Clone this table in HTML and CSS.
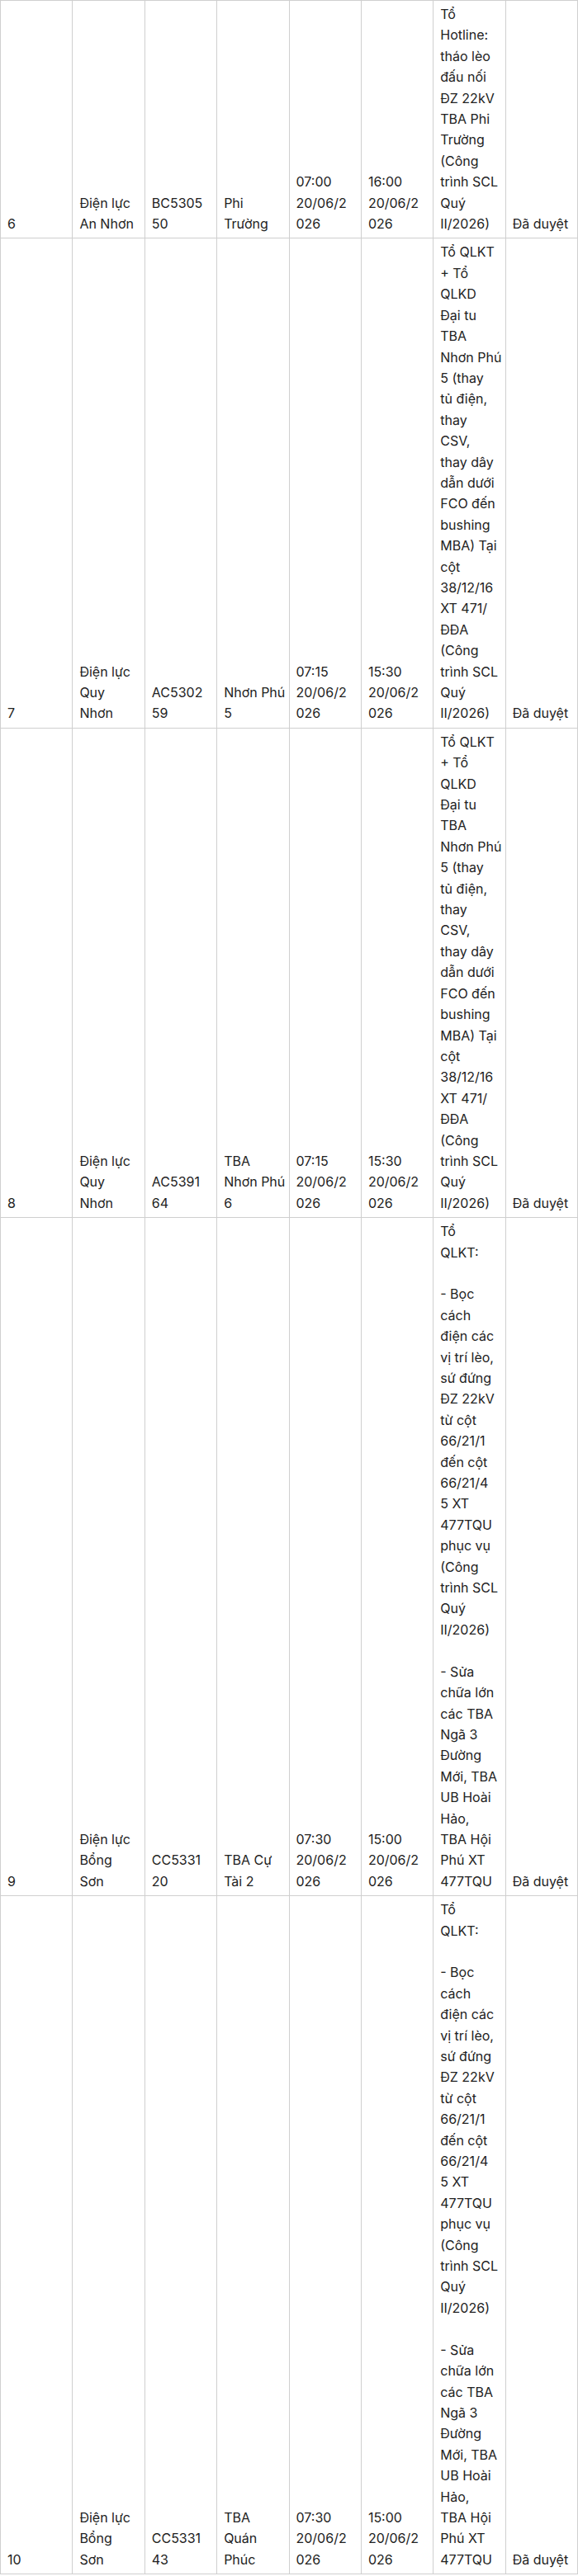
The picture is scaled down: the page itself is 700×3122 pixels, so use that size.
FILE: index.html
```html
<!DOCTYPE html>
<html lang="vi">
<head>
<meta charset="utf-8">
<title>Lịch cắt điện</title>
<link rel="stylesheet" href="styles.css">
</head>
<body>
<table class="schedule">
  <tbody>
    <tr>
      <td>6</td>
      <td>Điện lực<br>An Nhơn</td>
      <td>BC5305<br>50</td>
      <td>Phi<br>Trường</td>
      <td>07:00<br>20/06/2<br>026</td>
      <td>16:00<br>20/06/2<br>026</td>
      <td>Tổ<br>Hotline:<br>tháo lèo<br>đấu nối<br>ĐZ 22kV<br>TBA Phi<br>Trường<br>(Công<br>trình SCL<br>Quý<br>II/2026)</td>
      <td>Đã duyệt</td>
    </tr>
    <tr>
      <td>7</td>
      <td>Điện lực<br>Quy<br>Nhơn</td>
      <td>AC5302<br>59</td>
      <td>Nhơn Phú<br>5</td>
      <td>07:15<br>20/06/2<br>026</td>
      <td>15:30<br>20/06/2<br>026</td>
      <td>Tổ QLKT<br>+ Tổ<br>QLKD<br>Đại tu<br>TBA<br>Nhơn Phú<br>5 (thay<br>tủ điện,<br>thay<br>CSV,<br>thay dây<br>dẫn dưới<br>FCO đến<br>bushing<br>MBA) Tại<br>cột<br>38/12/16<br>XT 471/<br>ĐĐA<br>(Công<br>trình SCL<br>Quý<br>II/2026)</td>
      <td>Đã duyệt</td>
    </tr>
    <tr>
      <td>8</td>
      <td>Điện lực<br>Quy<br>Nhơn</td>
      <td>AC5391<br>64</td>
      <td>TBA<br>Nhơn Phú<br>6</td>
      <td>07:15<br>20/06/2<br>026</td>
      <td>15:30<br>20/06/2<br>026</td>
      <td>Tổ QLKT<br>+ Tổ<br>QLKD<br>Đại tu<br>TBA<br>Nhơn Phú<br>5 (thay<br>tủ điện,<br>thay<br>CSV,<br>thay dây<br>dẫn dưới<br>FCO đến<br>bushing<br>MBA) Tại<br>cột<br>38/12/16<br>XT 471/<br>ĐĐA<br>(Công<br>trình SCL<br>Quý<br>II/2026)</td>
      <td>Đã duyệt</td>
    </tr>
    <tr>
      <td>9</td>
      <td>Điện lực<br>Bổng<br>Sơn</td>
      <td>CC5331<br>20</td>
      <td>TBA Cự<br>Tài 2</td>
      <td>07:30<br>20/06/2<br>026</td>
      <td>15:00<br>20/06/2<br>026</td>
      <td>Tổ<br>QLKT:<br><br>- Bọc<br>cách<br>điện các<br>vị trí lèo,<br>sứ đứng<br>ĐZ 22kV<br>từ cột<br>66/21/1<br>đến cột<br>66/21/4<br>5 XT<br>477TQU<br>phục vụ<br>(Công<br>trình SCL<br>Quý<br>II/2026)<br><br>- Sửa<br>chữa lớn<br>các TBA<br>Ngã 3<br>Đường<br>Mới, TBA<br>UB Hoài<br>Hảo,<br>TBA Hội<br>Phú XT<br>477TQU</td>
      <td>Đã duyệt</td>
    </tr>
    <tr>
      <td>10</td>
      <td>Điện lực<br>Bổng<br>Sơn</td>
      <td>CC5331<br>43</td>
      <td>TBA<br>Quán<br>Phúc</td>
      <td>07:30<br>20/06/2<br>026</td>
      <td>15:00<br>20/06/2<br>026</td>
      <td>Tổ<br>QLKT:<br><br>- Bọc<br>cách<br>điện các<br>vị trí lèo,<br>sứ đứng<br>ĐZ 22kV<br>từ cột<br>66/21/1<br>đến cột<br>66/21/4<br>5 XT<br>477TQU<br>phục vụ<br>(Công<br>trình SCL<br>Quý<br>II/2026)<br><br>- Sửa<br>chữa lớn<br>các TBA<br>Ngã 3<br>Đường<br>Mới, TBA<br>UB Hoài<br>Hảo,<br>TBA Hội<br>Phú XT<br>477TQU</td>
      <td>Đã duyệt</td>
    </tr>
  </tbody>
</table>
</body>
</html>
```
FILE: styles.css
```css
html, body {
  margin: 0;
  padding: 0;
  background: #ffffff;
}

body {
  font-family: "Inter", "Noto Sans", "DejaVu Sans", sans-serif;
  font-size: 16px;
  line-height: 25.4px;
  color: #222222;
}

.schedule {
  width: 700px;
  table-layout: fixed;
  border-collapse: collapse;
}

.schedule td {
  border: 1px solid #cfcfcf;
  padding: 4px 8px;
  vertical-align: bottom;
  text-align: left;
  white-space: nowrap;
}
```
